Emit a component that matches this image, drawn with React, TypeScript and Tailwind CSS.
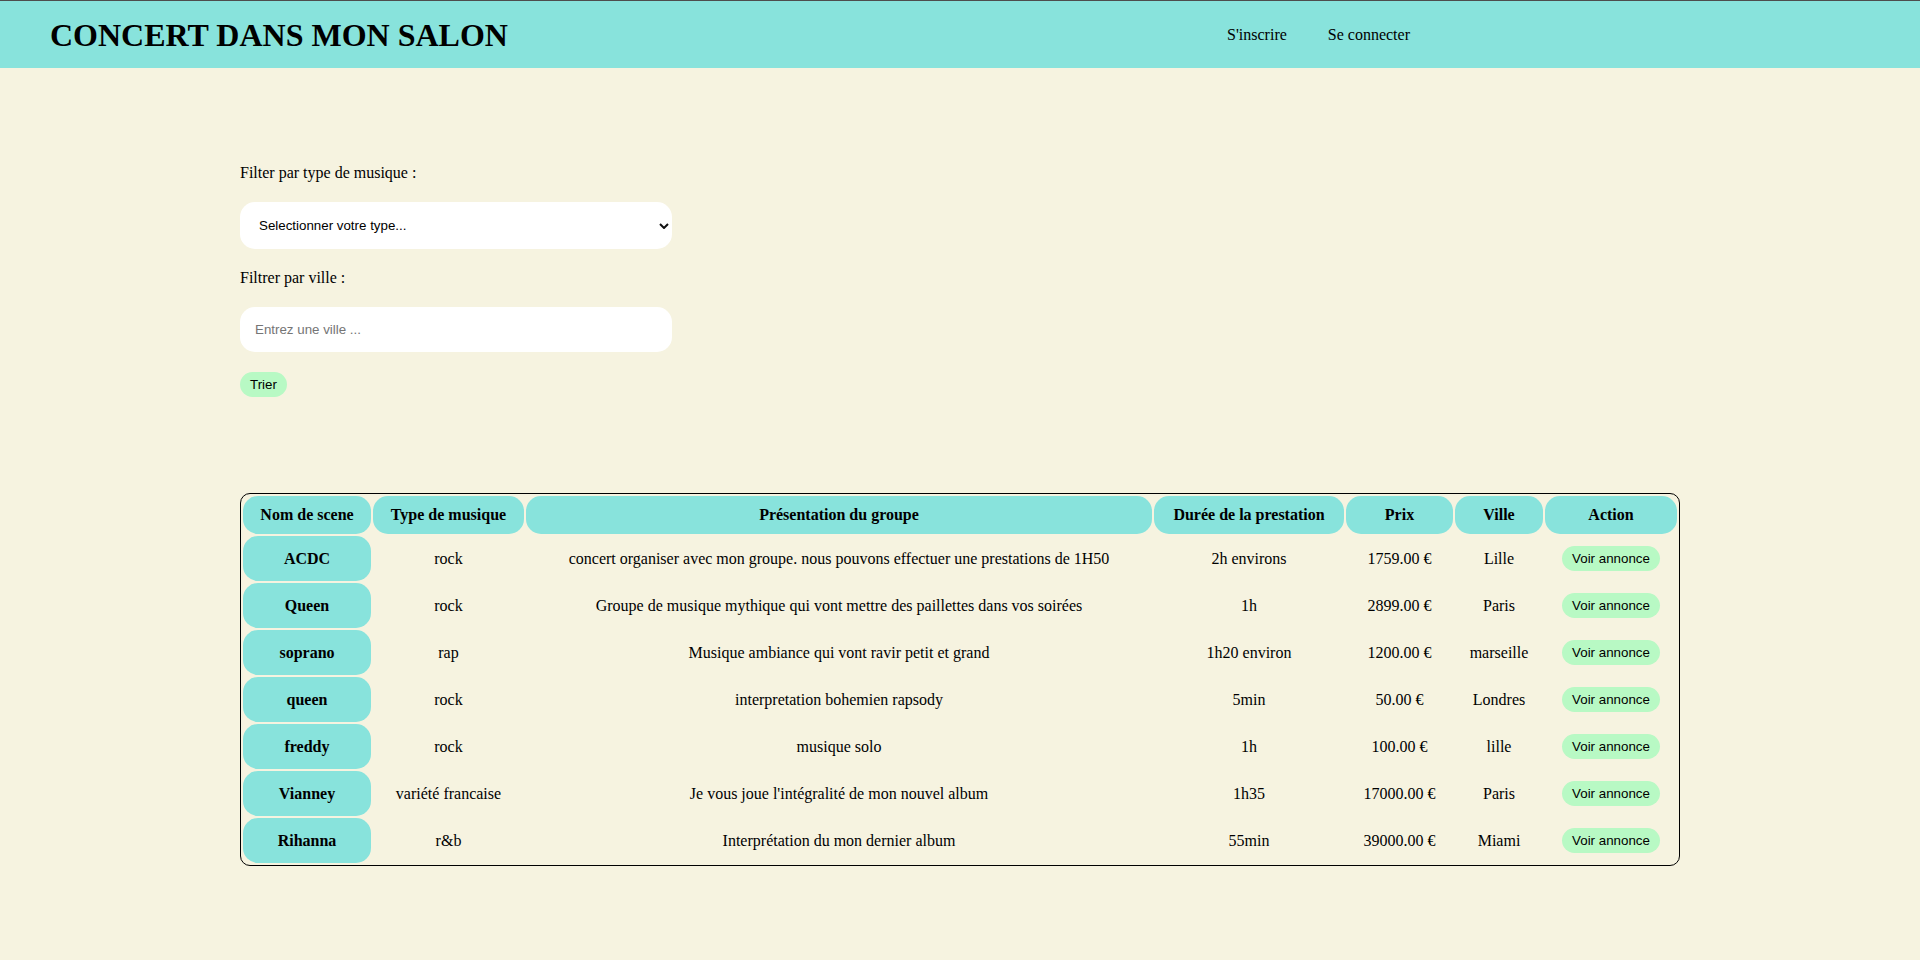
const rows = [
  { name: 'ACDC', type: 'rock', desc: 'concert organiser avec mon groupe. nous pouvons effectuer une prestations de 1H50', duree: '2h environs', prix: '1759.00 €', ville: 'Lille' },
  { name: 'Queen', type: 'rock', desc: 'Groupe de musique mythique qui vont mettre des paillettes dans vos soirées', duree: '1h', prix: '2899.00 €', ville: 'Paris' },
  { name: 'soprano', type: 'rap', desc: 'Musique ambiance qui vont ravir petit et grand', duree: '1h20 environ', prix: '1200.00 €', ville: 'marseille' },
  { name: 'queen', type: 'rock', desc: 'interpretation bohemien rapsody', duree: '5min', prix: '50.00 €', ville: 'Londres' },
  { name: 'freddy', type: 'rock', desc: 'musique solo', duree: '1h', prix: '100.00 €', ville: 'lille' },
  { name: 'Vianney', type: 'variété francaise', desc: "Je vous joue l'intégralité de mon nouvel album", duree: '1h35', prix: '17000.00 €', ville: 'Paris' },
  { name: 'Rihanna', type: 'r&b', desc: 'Interprétation du mon dernier album', duree: '55min', prix: '39000.00 €', ville: 'Miami' },
];

const headers = [
  { label: 'Nom de scene', w: 'w-[128px]' },
  { label: 'Type de musique', w: 'w-[151px]' },
  { label: 'Présentation du groupe', w: 'w-[626px]' },
  { label: 'Durée de la prestation', w: 'w-[190px]' },
  { label: 'Prix', w: 'w-[107px]' },
  { label: 'Ville', w: 'w-[88px]' },
  { label: 'Action', w: 'w-[132px]' },
];

const serif = "font-['Liberation_Serif','Times_New_Roman',serif]";
const sans = "font-['Liberation_Sans',Arial,sans-serif]";

export default function App() {
  return (
    <div className={`min-h-[960px] bg-[#f6f3e0] text-black ${serif}`}>
      <header className="flex h-[68px] items-center justify-between border-t border-[#4d4d4d] bg-[#88e3dc] pl-[50px] pr-[510px]">
        <h1 className="text-[32px] font-bold leading-normal">CONCERT DANS MON SALON</h1>
        <nav className="flex gap-[41px] text-base">
          <a href="#">S'inscrire</a>
          <a href="#">Se connecter</a>
        </nav>
      </header>

      <main className="mx-auto w-[1440px] pt-[96px]">
        <form className="flex flex-col items-start gap-5" onSubmit={(e) => e.preventDefault()}>
          <label className="text-base leading-[18px]">Filter par type de musique :</label>
          <div className="relative">
            <select className={`h-[47px] w-[432px] appearance-none rounded-[15px] bg-white pl-[19px] text-[13.33px] text-black outline-none ${sans}`}>
              <option>Selectionner votre type...</option>
              <option>rock</option>
              <option>rap</option>
              <option>r&b</option>
              <option>variété francaise</option>
            </select>
            <svg className="pointer-events-none absolute right-[3px] top-[21px]" width="10" height="6" viewBox="0 0 10 6">
              <path d="M1 1l4 4 4-4" fill="none" stroke="#111" strokeWidth="2" />
            </svg>
          </div>
          <label className="text-base leading-[18px]">Filtrer par ville :</label>
          <input
            placeholder="Entrez une ville ..."
            className={`h-[45px] w-[432px] rounded-[15px] bg-white pl-[15px] text-[13.33px] outline-none placeholder:text-[#757575] ${sans}`}
          />
          <button className={`h-[25px] rounded-full bg-[#b8f9c4] px-[10px] text-[13.33px] ${sans}`}>Trier</button>
        </form>

        <table className="mt-[96px] w-full border-separate border-spacing-[2px] rounded-[10px] border border-black text-base">
          <thead>
            <tr>
              {headers.map((h) => (
                <th key={h.label} className={`${h.w} rounded-[15px] bg-[#88e3dc] p-[10px] font-bold leading-[18px]`}>
                  {h.label}
                </th>
              ))}
            </tr>
          </thead>
          <tbody className="leading-[18px]">
            {rows.map((r, i) => (
              <tr key={i} className="h-[45px]">
                <td className="rounded-[15px] bg-[#88e3dc] p-[10px] text-center font-bold">{r.name}</td>
                <td className="p-[10px] text-center">{r.type}</td>
                <td className="p-[10px] text-center">{r.desc}</td>
                <td className="p-[10px] text-center">{r.duree}</td>
                <td className="p-[10px] text-center">{r.prix}</td>
                <td className="p-[10px] text-center">{r.ville}</td>
                <td className="p-[10px] text-center">
                  <button className={`mx-auto block h-[25px] rounded-full bg-[#b8f9c4] px-[10px] text-[13.33px] ${sans}`}>Voir annonce</button>
                </td>
              </tr>
            ))}
          </tbody>
        </table>
      </main>
    </div>
  );
}
